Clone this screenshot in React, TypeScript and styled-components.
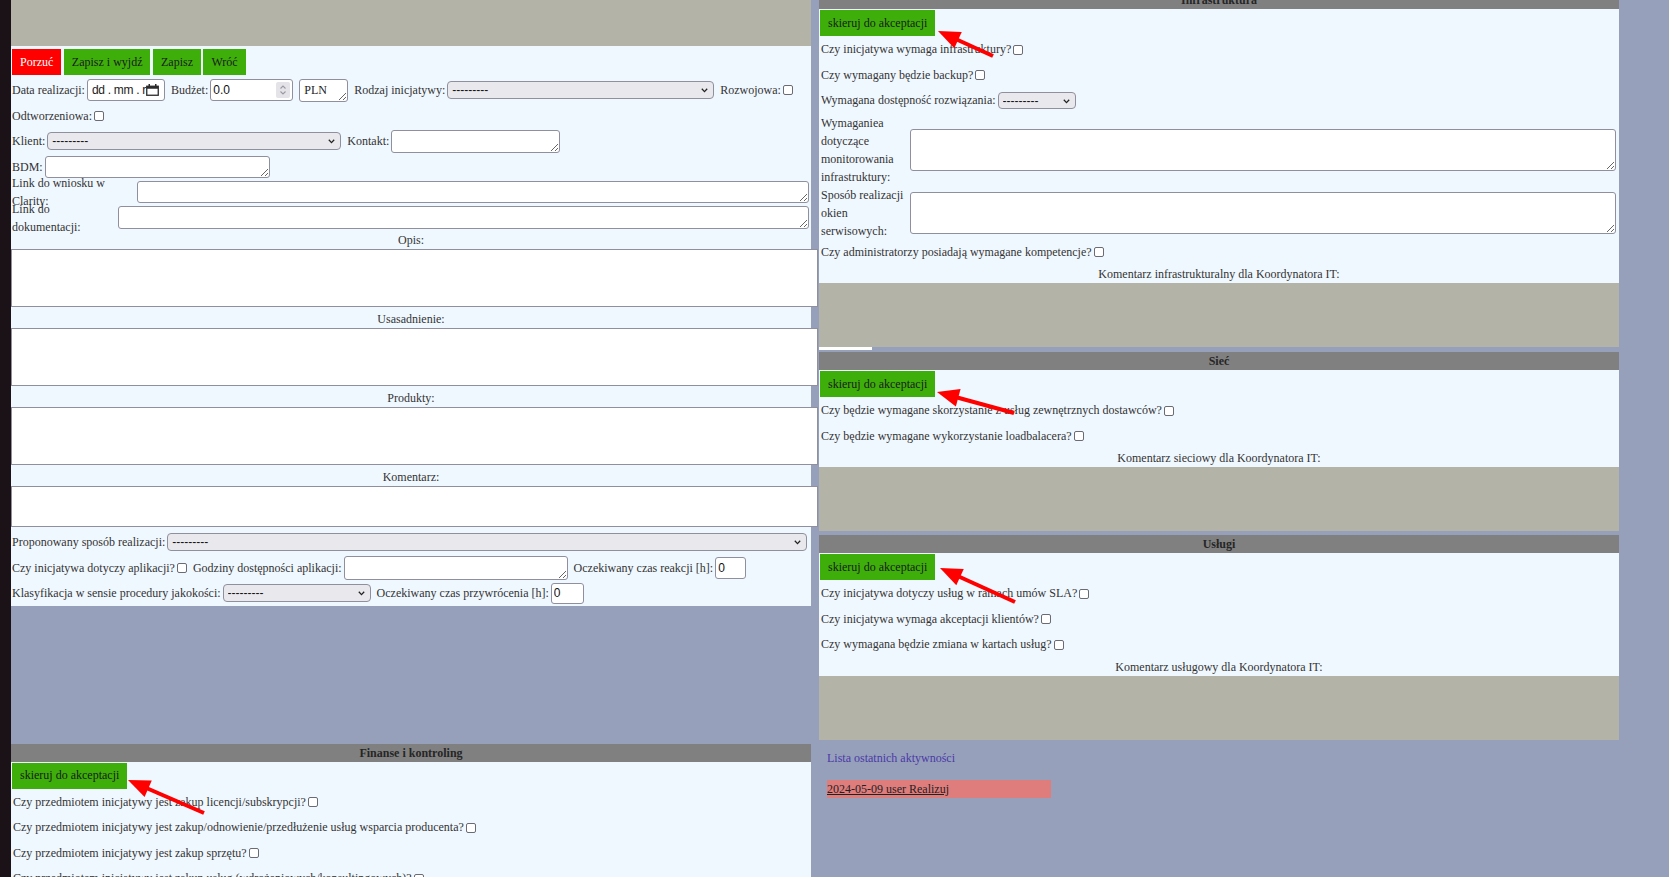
import React from "react";
import styled, { createGlobalStyle } from "styled-components";

const C = {
  bg: "#96a0bb",
  strip: "#1b1218",
  panel: "#f0f8ff",
  stone: "#b3b3a7",
  header: "#808080",
  green: "#3eaf0a",
  red: "#ff0000",
  text: "#333333",
  border: "#8f8f9d",
  control: "#e9e9ed",
};

const GlobalStyle = createGlobalStyle`
  html, body { margin: 0; padding: 0; height: 100%; overflow: hidden; }
  body {
    background: ${C.bg};
    font-family: "Liberation Serif", "Times New Roman", serif;
    font-size: 12px;
    color: ${C.text};
  }
`;

const Page = styled.div`
  display: flex;
  min-height: 100vh;
`;

const SideStrip = styled.div`
  flex: none;
  width: 11px;
  background: ${C.strip};
`;

const Layout = styled.main`
  display: grid;
  grid-template-columns: 800px 800px;
  column-gap: 8px;
  row-gap: 4px;
  align-items: start;
  align-content: start;
  margin-top: -9px; /* the page is scrolled a few pixels */
`;

/* ---------- left form panel ---------- */

const FormPanel = styled.div`
  background: ${C.panel};
`;

const TopBand = styled.div`
  height: 55px;
  background: ${C.stone};
`;

const ActionBar = styled.div`
  display: flex;
  gap: 2.5px;
  padding: 3px 1px 2.5px;
`;

const ActionButton = styled.button<{ $danger?: boolean }>`
  height: 26px;
  padding: 0 8px;
  border: none;
  border-radius: 0;
  background: ${(p) => (p.$danger ? C.red : C.green)};
  color: ${(p) => (p.$danger ? "#ffffff" : "#1a1a1a")};
  font: 12px "Liberation Serif", "Times New Roman", serif;
  cursor: pointer;
`;

const Line = styled.div<{ $gap?: number }>`
  display: flex;
  align-items: center;
  column-gap: ${(p) => p.$gap ?? 6}px;
  height: 25.5px;
  padding: 0 1px;
  white-space: nowrap;
`;

const Field = styled.span`
  display: inline-flex;
  align-items: center;
  gap: 2px;
`;

const Label = styled.span`
  line-height: 18px;
`;

const WrapLabel = styled.span<{ $w: number }>`
  flex: none;
  width: ${(p) => p.$w}px;
  white-space: normal;
  line-height: 18px;
`;

const TextBox = styled.textarea<{ $w?: number; $h: number; $grow?: boolean }>`
  box-sizing: border-box;
  flex: ${(p) => (p.$grow ? "1 1 auto" : "none")};
  width: ${(p) => (p.$w ? `${p.$w}px` : "auto")};
  min-width: 0;
  height: ${(p) => p.$h}px;
  margin: 0 ${(p) => (p.$grow ? 1 : 0)}px 0 0;
  padding: 3px 4px;
  border: 1px solid ${C.border};
  border-radius: 3px;
  background: #ffffff;
  font: 12px "Liberation Serif", "Times New Roman", serif;
  color: #222222;
  resize: both;
  overflow: hidden;
`;

const ValueInput = styled.input<{ $w: number; $h?: number }>`
  box-sizing: border-box;
  flex: none;
  width: ${(p) => p.$w}px;
  height: ${(p) => p.$h ?? 22}px;
  margin: 0;
  padding: 0 2px;
  border: 1px solid ${C.border};
  border-radius: 3px;
  background: #ffffff;
  font: 12px "Liberation Sans", Arial, sans-serif;
  color: #111111;
`;

const BoxShell = styled.span<{ $w: number }>`
  box-sizing: border-box;
  display: inline-flex;
  align-items: center;
  flex: none;
  width: ${(p) => p.$w}px;
  height: 22px;
  border: 1px solid ${C.border};
  border-radius: 3px;
  background: #ffffff;
  font: 12px "Liberation Sans", Arial, sans-serif;
  color: #222222;
  overflow: hidden;
`;

const DateText = styled.span`
  flex: 1 1 auto;
  overflow: hidden;
  white-space: nowrap;
  padding-left: 4px;
  letter-spacing: -0.3px;
`;

const BareInput = styled.input`
  flex: 1 1 auto;
  min-width: 0;
  height: 100%;
  margin: 0;
  padding: 0 2px;
  border: none;
  outline: none;
  background: transparent;
  font: 12px "Liberation Sans", Arial, sans-serif;
  color: #111111;
`;

const Spinner = styled.span`
  display: flex;
  flex: none;
  width: 14px;
  height: 16px;
  margin-right: 2px;
  border-radius: 2px;
  background: #e3e3e8;
  align-items: center;
  justify-content: center;
`;

const SelectWrap = styled.span<{ $w: number; $h?: number }>`
  position: relative;
  display: inline-flex;
  flex: none;
  width: ${(p) => p.$w}px;
  height: ${(p) => p.$h ?? 18}px;
`;

const NativeSelect = styled.select`
  appearance: none;
  box-sizing: border-box;
  width: 100%;
  height: 100%;
  margin: 0;
  padding: 0 16px 0 4px;
  border: 1px solid ${C.border};
  border-radius: 4px;
  background: ${C.control};
  font: 12px "Liberation Sans", Arial, sans-serif;
  color: #111111;
`;

const Chevron = styled.svg`
  position: absolute;
  right: 6px;
  top: calc(50% - 2px);
  pointer-events: none;
`;

const Check = styled.input.attrs({ type: "checkbox" })`
  appearance: none;
  box-sizing: border-box;
  flex: none;
  width: 10px;
  height: 10px;
  margin: 0;
  border: 1px solid #6b6b73;
  border-radius: 2px;
  background: #ffffff;
`;

const BlockLabel = styled.div`
  height: 18px;
  line-height: 18px;
  text-align: center;
`;

const BigTextarea = styled.textarea<{ $h: number }>`
  display: block;
  box-sizing: border-box;
  width: calc(100% + 7px);
  height: ${(p) => p.$h}px;
  margin: 0 0 3px;
  padding: 2px;
  border: 1px solid ${C.border};
  background: #ffffff;
  font: 12px "Liberation Serif", serif;
  resize: none;
`;

/* ---------- sections (right column, finance) ---------- */

const Column = styled.div`
  display: flex;
  flex-direction: column;
`;

const Section = styled.section<{ $after?: number }>`
  position: relative;
  background: ${C.panel};
  margin-bottom: ${(p) => p.$after ?? 0}px;
`;

const SectionHeader = styled.div`
  height: 18px;
  line-height: 18px;
  background: ${C.header};
  text-align: center;
  font-weight: bold;
  color: #262626;
`;

const AcceptButton = styled.button`
  display: block;
  height: 26px;
  margin: 1px 0 1px 1px;
  padding: 0 8px;
  border: none;
  background: ${C.green};
  color: #1a1a1a;
  font: 12px "Liberation Serif", "Times New Roman", serif;
  cursor: pointer;
`;

const Question = styled.label`
  display: flex;
  align-items: center;
  gap: 2px;
  height: 25.5px;
  padding-left: 2px;
  white-space: nowrap;
`;

const NoteRow = styled.div`
  display: flex;
  align-items: center;
  gap: 4px;
  padding: 0 2px;
`;

const CommentLabel = styled.div`
  height: 18px;
  line-height: 18px;
  text-align: center;
`;

const CommentArea = styled.div`
  height: 64px;
  background: ${C.stone};
`;

const WhiteNub = styled.div`
  width: 53px;
  height: 3px;
  margin-bottom: 2px;
  background: #ffffff;
`;

const ArrowLayer = styled.svg`
  position: absolute;
  left: 0;
  top: 0;
  overflow: visible;
  pointer-events: none;
`;

/* ---------- activity ---------- */

const Activity = styled.div`
  padding: 5.5px 8px;
`;

const ActivityTitle = styled.a`
  display: block;
  line-height: 18px;
  color: #4a3aa6;
  text-decoration: none;
`;

const ActivityItem = styled.div`
  width: 224px;
  height: 18px;
  margin-top: 13px;
  line-height: 18px;
  background: #df7d7d;
`;

const ActivityLink = styled.a`
  color: #222222;
  text-decoration: underline;
`;

/* ---------- small drawings ---------- */

function Select({ w, h }: { w: number; h?: number }) {
  return (
    <SelectWrap $w={w} $h={h}>
      <NativeSelect defaultValue="">
        <option value="">---------</option>
      </NativeSelect>
      <Chevron width="7" height="5" viewBox="0 0 7 5">
        <path d="M0.8 0.8 L3.5 3.6 L6.2 0.8" fill="none" stroke="#222" strokeWidth="1.3" />
      </Chevron>
    </SelectWrap>
  );
}

function CalendarIcon() {
  return (
    <svg width="13" height="12" viewBox="0 0 13 12" style={{ flex: "none", marginRight: 5 }}>
      <rect x="0.75" y="2.25" width="11.5" height="9" fill="none" stroke="#2b2b2b" strokeWidth="1.3" />
      <rect x="0.75" y="2.25" width="11.5" height="2.5" fill="#2b2b2b" />
      <rect x="2.5" y="0" width="1.5" height="3" fill="#2b2b2b" />
      <rect x="9" y="0" width="1.5" height="3" fill="#2b2b2b" />
    </svg>
  );
}

function SpinIcon() {
  return (
    <svg width="8" height="12" viewBox="0 0 8 12">
      <path d="M1.5 4.5 L4 2 L6.5 4.5" fill="none" stroke="#9a9aa2" strokeWidth="1.1" />
      <path d="M1.5 7.5 L4 10 L6.5 7.5" fill="none" stroke="#9a9aa2" strokeWidth="1.1" />
    </svg>
  );
}

function Arrow({ tip, tail }: { tip: [number, number]; tail: [number, number] }) {
  const [tx, ty] = tip;
  const [sx, sy] = tail;
  const dx = tx - sx;
  const dy = ty - sy;
  const len = Math.hypot(dx, dy);
  const ux = dx / len;
  const uy = dy / len;
  const nx = -uy;
  const ny = ux;
  const headLen = 22;
  const headW = 9;
  const bx = tx - ux * headLen;
  const by = ty - uy * headLen;
  return (
    <ArrowLayer width="1" height="1">
      <line x1={sx} y1={sy} x2={bx + ux * 2} y2={by + uy * 2} stroke="#ff0000" strokeWidth="4" />
      <polygon
        points={`${tx},${ty} ${bx + nx * headW},${by + ny * headW} ${bx - nx * headW},${by - ny * headW}`}
        fill="#ff0000"
      />
    </ArrowLayer>
  );
}

function Q({ children }: { children: React.ReactNode }) {
  return (
    <Question>
      {children}
      <Check />
    </Question>
  );
}

/* ---------- page ---------- */

export default function App() {
  return (
    <>
      <GlobalStyle />
      <Page>
        <SideStrip />
        <Layout>
          <FormPanel>
            <TopBand />
            <ActionBar>
              <ActionButton $danger>Porzuć</ActionButton>
              <ActionButton>Zapisz i wyjdź</ActionButton>
              <ActionButton>Zapisz</ActionButton>
              <ActionButton>Wróć</ActionButton>
            </ActionBar>

            <Line>
              <Field>
                <Label>Data realizacji:</Label>
                <BoxShell $w={78}>
                  <DateText>dd . mm . rrrr</DateText>
                  <CalendarIcon />
                </BoxShell>
              </Field>
              <Field>
                <Label>Budżet:</Label>
                <BoxShell $w={83}>
                  <BareInput defaultValue="0.0" />
                  <Spinner>
                    <SpinIcon />
                  </Spinner>
                </BoxShell>
              </Field>
              <TextBox $w={49} $h={23} defaultValue="PLN" />
              <Field>
                <Label>Rodzaj inicjatywy:</Label>
                <Select w={267} />
              </Field>
              <Field>
                <Label>Rozwojowa:</Label>
                <Check />
              </Field>
            </Line>
            <Line>
              <Field>
                <Label>Odtworzeniowa:</Label>
                <Check />
              </Field>
            </Line>
            <Line>
              <Field>
                <Label>Klient:</Label>
                <Select w={294} />
              </Field>
              <Field>
                <Label>Kontakt:</Label>
                <TextBox $w={169} $h={23} />
              </Field>
            </Line>
            <Line>
              <Field>
                <Label>BDM:</Label>
                <TextBox $w={225} $h={22} />
              </Field>
            </Line>
            <Line $gap={4}>
              <WrapLabel $w={121}>Link do wniosku w Clarity:</WrapLabel>
              <TextBox $grow $h={22} />
            </Line>
            <Line $gap={4}>
              <WrapLabel $w={102}>Link do dokumentacji:</WrapLabel>
              <TextBox $grow $h={23} />
            </Line>

            <BlockLabel>Opis:</BlockLabel>
            <BigTextarea $h={58} />
            <BlockLabel>Usasadnienie:</BlockLabel>
            <BigTextarea $h={58} />
            <BlockLabel>Produkty:</BlockLabel>
            <BigTextarea $h={58} />
            <BlockLabel>Komentarz:</BlockLabel>
            <BigTextarea $h={41} />

            <Line>
              <Field>
                <Label>Proponowany sposób realizacji:</Label>
                <Select w={640} />
              </Field>
            </Line>
            <Line>
              <Field>
                <Label>Czy inicjatywa dotyczy aplikacji?</Label>
                <Check />
              </Field>
              <Field>
                <Label>Godziny dostępności aplikacji:</Label>
                <TextBox $w={224} $h={24} />
              </Field>
              <Field>
                <Label>Oczekiwany czas reakcji [h]:</Label>
                <ValueInput $w={31} defaultValue="0" />
              </Field>
            </Line>
            <Line>
              <Field>
                <Label>Klasyfikacja w sensie procedury jakokości:</Label>
                <Select w={148} />
              </Field>
              <Field>
                <Label>Oczekiwany czas przywrócenia [h]:</Label>
                <ValueInput $w={33} $h={21} defaultValue="0" />
              </Field>
            </Line>
          </FormPanel>

          <Column>
            <Section>
              <SectionHeader>Infrastruktura</SectionHeader>
              <AcceptButton>skieruj do akceptacji</AcceptButton>
              <Q>Czy inicjatywa wymaga infrastruktury?</Q>
              <Q>Czy wymagany będzie backup?</Q>
              <Question>
                Wymagana dostępność rozwiązania:
                <Select w={78} h={17} />
              </Question>
              <NoteRow>
                <WrapLabel $w={85}>Wymaganiea dotyczące monitorowania infrastruktury:</WrapLabel>
                <TextBox $grow $h={42} />
              </NoteRow>
              <NoteRow>
                <WrapLabel $w={85}>Sposób realizacji okien serwisowych:</WrapLabel>
                <TextBox $grow $h={42} />
              </NoteRow>
              <Q>Czy administratorzy posiadają wymagane kompetencje?</Q>
              <CommentLabel>Komentarz infrastrukturalny dla Koordynatora IT:</CommentLabel>
              <CommentArea />
              <Arrow tip={[119, 40]} tail={[174, 65]} />
            </Section>
            <WhiteNub />

            <Section $after={4}>
              <SectionHeader>Sieć</SectionHeader>
              <AcceptButton>skieruj do akceptacji</AcceptButton>
              <Q>Czy będzie wymagane skorzystanie z usług zewnętrznych dostawców?</Q>
              <Q>Czy będzie wymagane wykorzystanie loadbalacera?</Q>
              <CommentLabel>Komentarz sieciowy dla Koordynatora IT:</CommentLabel>
              <CommentArea />
              <Arrow tip={[118, 40]} tail={[195, 61]} />
            </Section>

            <Section>
              <SectionHeader>Usługi</SectionHeader>
              <AcceptButton>skieruj do akceptacji</AcceptButton>
              <Q>Czy inicjatywa dotyczy usług w ramach umów SLA?</Q>
              <Q>Czy inicjatywa wymaga akceptacji klientów?</Q>
              <Q>Czy wymagana będzie zmiana w kartach usług?</Q>
              <CommentLabel>Komentarz usługowy dla Koordynatora IT:</CommentLabel>
              <CommentArea />
              <Arrow tip={[121, 33]} tail={[196, 67]} />
            </Section>
          </Column>

          <Section>
            <SectionHeader>Finanse i kontroling</SectionHeader>
            <AcceptButton>skieruj do akceptacji</AcceptButton>
            <Q>Czy przedmiotem inicjatywy jest zakup licencji/subskrypcji?</Q>
            <Q>Czy przedmiotem inicjatywy jest zakup/odnowienie/przedłużenie usług wsparcia producenta?</Q>
            <Q>Czy przedmiotem inicjatywy jest zakup sprzętu?</Q>
            <Q>Czy przedmiotem inicjatywy jest zakup usług (wdrożeniowych/konsultingowych)?</Q>
            <Arrow tip={[117, 36]} tail={[193, 69]} />
          </Section>

          <Activity>
            <ActivityTitle href="#">Lista ostatnich aktywności</ActivityTitle>
            <ActivityItem>
              <ActivityLink href="#">2024-05-09 user Realizuj</ActivityLink>
            </ActivityItem>
          </Activity>
        </Layout>
      </Page>
    </>
  );
}
